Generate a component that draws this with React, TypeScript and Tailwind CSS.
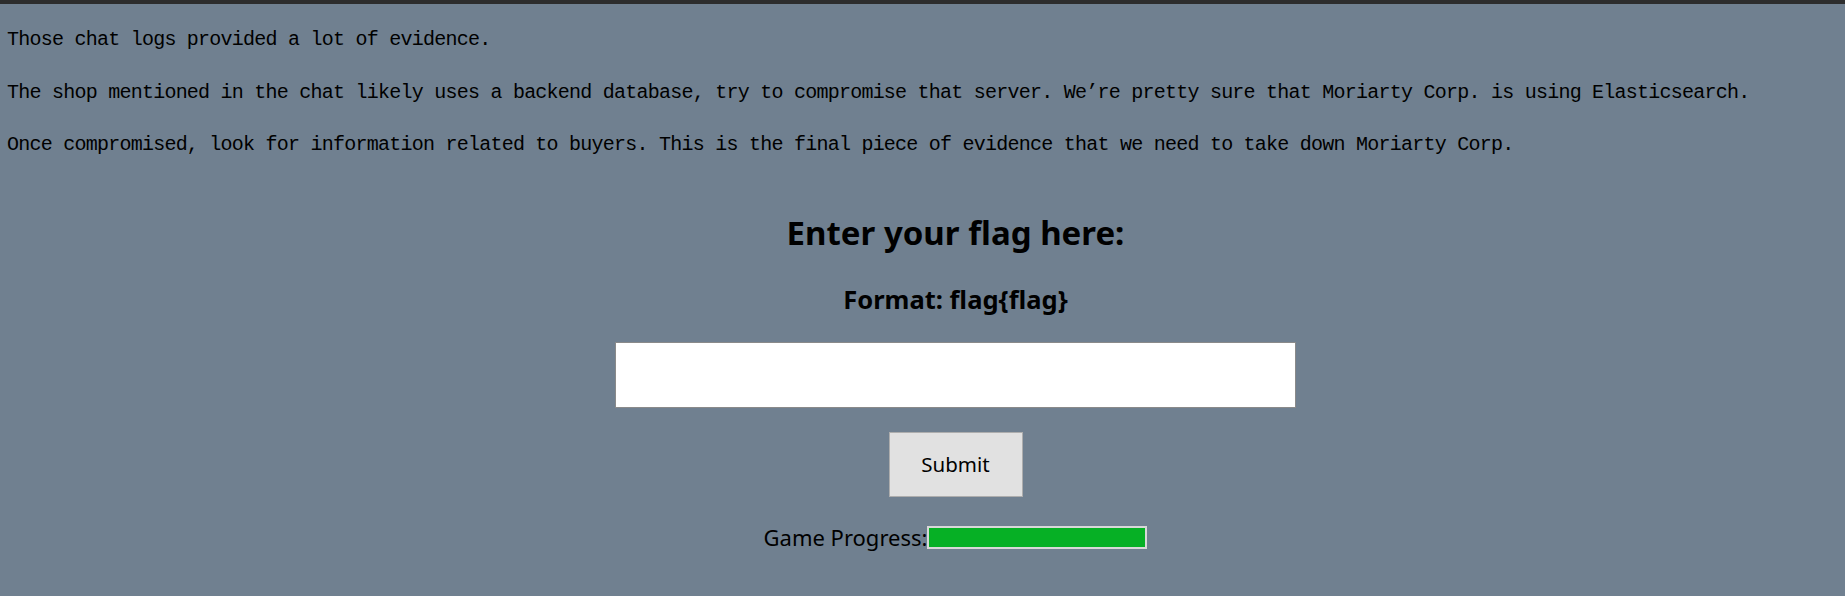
export default function App() {
  const lines = [
    "Those chat logs provided a lot of evidence.",
    "The shop mentioned in the chat likely uses a backend database, try to compromise that server. We’re pretty sure that Moriarty Corp. is using Elasticsearch.",
    "Once compromised, look for information related to buyers. This is the final piece of evidence that we need to take down Moriarty Corp.",
  ];

  return (
    <div className="min-h-screen bg-[#708090] border-t-4 border-[#2d2d2d] text-black">
      <div className="flex flex-col gap-[28.5px] pt-6 pl-[7px] font-['Liberation_Mono',monospace] text-[20px] tracking-[-0.76px] leading-[24px] whitespace-nowrap">
        {lines.map((line) => (
          <p key={line}>{line}</p>
        ))}
      </div>

      <div className="flex flex-col items-center pl-[66px] font-['Noto_Sans',sans-serif]">
        <h2 className="mt-14 text-[33px] font-bold leading-[40px]">Enter your flag here:</h2>
        <h3 className="mt-[31px] text-[25.5px] font-bold leading-[30px]">Format: flag{"{flag}"}</h3>
        <input
          type="text"
          className="mt-7 w-[681px] h-[66px] bg-white border border-[#8a8a8a] outline-none px-2 text-[20px]"
        />
        <button className="mt-6 w-[134px] h-[65px] bg-[#e1e1e1] border border-[#adadad] text-[20.5px] leading-none">
          Submit
        </button>
        <div className="mt-7 flex items-center h-6 text-[22px] leading-none">
          <span>Game Progress:</span>
          <div className="w-[220px] h-[23px] border-2 border-[#d8d8d8] bg-[#06b025]" />
        </div>
      </div>
    </div>
  );
}
